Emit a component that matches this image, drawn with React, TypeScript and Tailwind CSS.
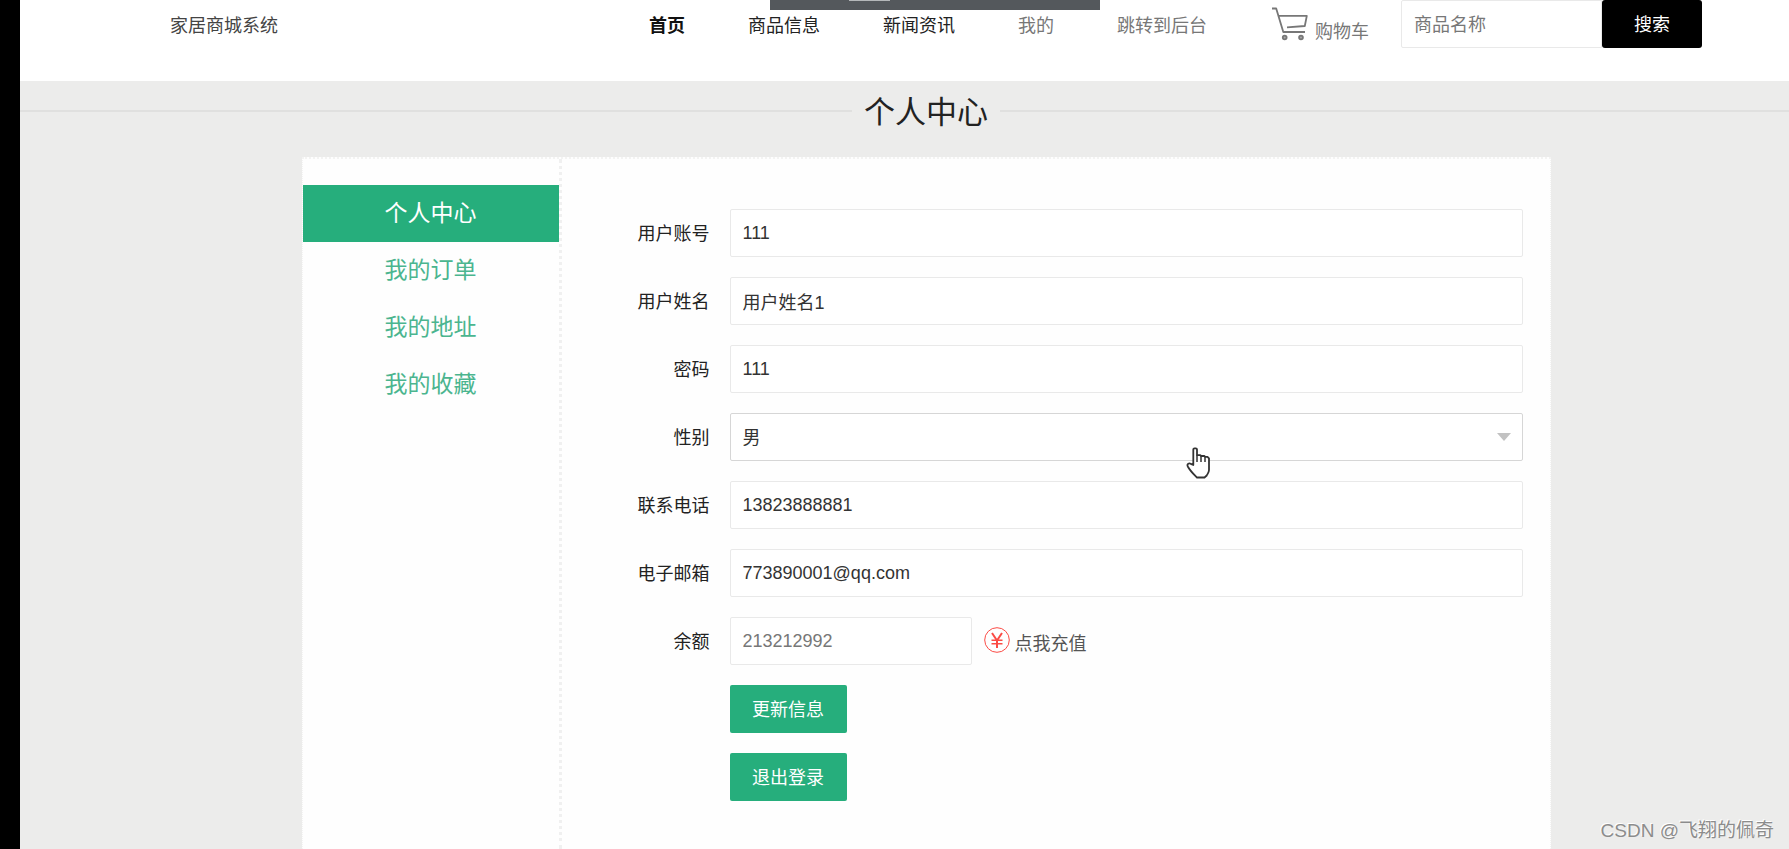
import type { ReactNode } from 'react';

const navLinks = [
  { label: '首页', style: 'font-bold text-[#111]' },
  { label: '商品信息', style: 'text-[#222]' },
  { label: '新闻资讯', style: 'text-[#222]' },
  { label: '我的', style: 'text-[#777]' },
  { label: '跳转到后台', style: 'text-[#777]' },
];

const menu = ['个人中心', '我的订单', '我的地址', '我的收藏'];

const inputStyle =
  'h-12 w-full rounded-[2px] border border-[#e9e9e9] bg-white pl-3 pr-3 text-[18px] text-[#333] outline-none';

function CartIcon() {
  return (
    <svg width="36" height="34" viewBox="0 0 36 34" fill="none" stroke="#777" strokeWidth="1.8" aria-hidden="true">
      <path d="M0 1.500h4.200L11.300 25H33M6 8.800h28.800L32.800 19 15 20.300" strokeLinejoin="round" />
      <circle cx="12.700" cy="30.500" r="1.900" fill="#aaa" />
      <circle cx="29" cy="30.500" r="1.900" fill="#aaa" />
    </svg>
  );
}

function YenIcon() {
  return (
    <svg width="26" height="26" viewBox="0 0 26 26" fill="none" stroke="#fb4b45" aria-hidden="true">
      <circle cx="13" cy="13" r="12.300" strokeWidth="1" />
      <path d="M8 6l5 7.500L18 6M13 13.500V21" strokeWidth="2" />
      <path d="M7.500 13.200h11M7.500 16.700h11" strokeWidth="1.600" />
    </svg>
  );
}

function HandCursor() {
  return (
    <svg className="pointer-events-none absolute left-[456px] top-[34px]" width="24" height="32" viewBox="0 0 24 32" aria-hidden="true">
      <path
        d="M7.300 18V2.500a1.200 1.200 0 0 1 1.200-1.200h1.300A1.200 1.200 0 0 1 11 2.500v5.700h3.300l1 .8h3l1 .9h2.200l1.500 1.500V23c0 2.500-1.500 4-2.300 5.500L18.500 30.500h-7.500C8.500 28 4.500 24.500 1.800 19.500c-1.300-2.600 1.500-3.800 3-2.600z"
        fill="#fff"
        stroke="#333"
        strokeWidth="1.800"
        strokeLinejoin="round"
      />
      <path d="M11 8.200V15M15 9v6M19 10v5" stroke="#333" strokeWidth="1.500" />
    </svg>
  );
}

function Row({ label, id, children }: { label: string; id: string; children: ReactNode }) {
  return (
    <div className="flex h-12 items-center gap-5">
      <label htmlFor={id} className="w-[124px] shrink-0 pt-[2px] text-right text-[#222]">
        {label}
      </label>
      <div className="relative min-w-0 flex-1">{children}</div>
    </div>
  );
}

function TextRow({ label, id, value }: { label: string; id: string; value: string }) {
  return (
    <Row label={label} id={id}>
      <input id={id} type="text" defaultValue={value} className={inputStyle} />
    </Row>
  );
}

export default function App() {
  return (
    <div className="relative flex min-h-screen overflow-hidden bg-[#ececeb] font-['Liberation_Sans','Noto_Sans_CJK_SC',sans-serif] text-[18px] leading-[24px]">
      <div className="w-5 shrink-0 bg-black" />
      <div className="flex min-w-0 flex-1 flex-col">
        <header className="flex h-[81px] items-start justify-between bg-white pl-[150px] pr-[87px]">
          <a href="#home" className="flex h-[52px] shrink-0 items-center text-[#444]">
            家居商城系统
          </a>
          <div className="flex h-12 shrink-0 items-stretch">
            <nav className="flex h-[52px] items-center gap-[63px]">
              {navLinks.map((link) => (
                <a key={link.label} href="#nav" className={link.style}>
                  {link.label}
                </a>
              ))}
            </nav>
            <a href="#cart" className="ml-[65px] mr-8 flex items-end gap-[7px] pb-[7px] leading-[18px] text-[#777]">
              <CartIcon />
              购物车
            </a>
            <form className="flex" onSubmit={(e) => e.preventDefault()}>
              <input
                type="text"
                aria-label="商品名称"
                placeholder="商品名称"
                className="w-[201px] rounded-l-[2px] border border-[#e9e9e9] pl-3 pt-[2px] outline-none placeholder:text-[#777]"
              />
              <button type="submit" className="w-[100px] rounded-[3px] bg-black pt-[2px] text-white">
                搜索
              </button>
            </form>
          </div>
        </header>

        <main className="-mr-[43px] flex flex-1 flex-col">
          <div className="flex h-[76px] items-start gap-3 pt-3">
            <div className="mt-[17px] h-[2px] flex-1 bg-[#e0e0df]" />
            <h1 className="text-[31px] leading-[40px] text-[#222]">个人中心</h1>
            <div className="mt-[17px] h-[2px] flex-1 bg-[#e0e0df]" />
          </div>

          <div className="mx-auto flex w-full max-w-[1249px] flex-1 border-x border-t-2 border-dotted border-[#f3f3f2] bg-[#fefefe]">
            <aside className="w-[259px] shrink-0 border-r-[3px] border-dotted border-[#f0f0f0] pt-[26px]">
              <ul className="text-center text-[23px] leading-[57px]">
                {menu.map((item, i) => (
                  <li key={item}>
                    <a href="#menu" className={i === 0 ? 'block bg-[#26ae7c] text-white' : 'block text-[#4bb58f]'}>
                      {item}
                    </a>
                  </li>
                ))}
              </ul>
            </aside>

            <form className="flex min-w-0 flex-1 flex-col gap-5 pl-6 pr-[27px] pt-[50px]" onSubmit={(e) => e.preventDefault()}>
              <TextRow label="用户账号" id="account" value="111" />
              <TextRow label="用户姓名" id="name" value="用户姓名1" />
              <TextRow label="密码" id="password" value="111" />
              <Row label="性别" id="gender">
                <select
                  id="gender"
                  defaultValue="男"
                  className="block h-12 w-full appearance-none rounded-[2px] border border-[#d6d6d6] bg-white pl-3 pt-[2px] text-[#333] outline-none"
                >
                  <option>男</option>
                  <option>女</option>
                </select>
                <svg className="pointer-events-none absolute right-3 top-5" width="14" height="8" viewBox="0 0 14 8" aria-hidden="true">
                  <path d="M0 0h14L7 8z" fill="#c2c2c2" />
                </svg>
                <HandCursor />
              </Row>
              <TextRow label="联系电话" id="phone" value="13823888881" />
              <TextRow label="电子邮箱" id="email" value="773890001@qq.com" />
              <Row label="余额" id="balance">
                <div className="flex h-12">
                  <div className="w-[242px]">
                    <input id="balance" type="text" readOnly placeholder="213212992" className={inputStyle + ' placeholder:text-[#777]'} />
                  </div>
                  <a href="#recharge" className="ml-3 flex items-end gap-[5px] pb-3 leading-[18px] text-[#555]">
                    <YenIcon />
                    点我充值
                  </a>
                </div>
              </Row>
              <button type="submit" className="ml-36 h-12 w-[117px] rounded-[2px] bg-[#26ae7c] pt-[2px] text-white">
                更新信息
              </button>
              <button type="button" className="ml-36 h-12 w-[117px] rounded-[2px] bg-[#26ae7c] pt-[2px] text-white">
                退出登录
              </button>
            </form>
          </div>
        </main>
      </div>

      <div className="absolute left-[770px] top-0 flex h-[10px] w-[330px] bg-[#54585c]">
        <div className="ml-[79px] h-px w-[41px] bg-[#b5b8ba]" />
      </div>
      <div className="absolute bottom-[5px] right-[15px] text-[19px] leading-[26px] text-[#8c8c8c] [text-shadow:-1px_-1px_0_#fff]">
        CSDN @飞翔的佩奇
      </div>
    </div>
  );
}
